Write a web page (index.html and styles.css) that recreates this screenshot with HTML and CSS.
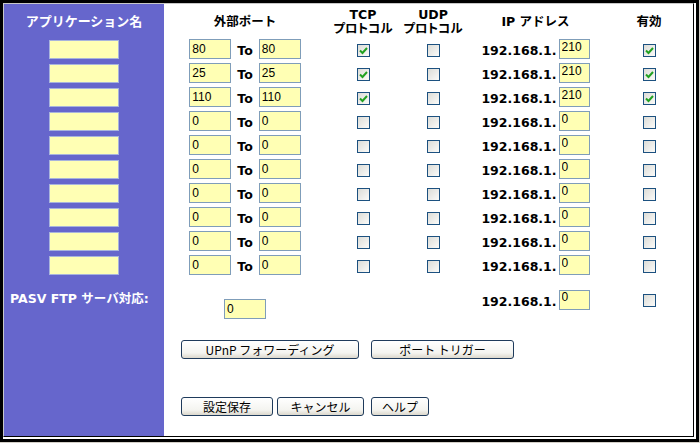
FILE: index.html
```html
<!DOCTYPE html>
<html lang="ja">
<head>
    <meta charset="UTF-8">
    <title>ポート フォワーディング</title>
    <link rel="stylesheet" href="styles.css">
</head>
<body>
    <div class="frame">
        <div class="panel">
            <table class="fwd">
                <colgroup>
                    <col class="c-app">
                    <col class="c-port">
                    <col class="c-tcp">
                    <col class="c-udp">
                    <col class="c-ip">
                    <col class="c-on">
                </colgroup>
                <thead>
                    <tr class="head">
                        <th class="side">アプリケーション名</th>
                        <th>外部ポート</th>
                        <th class="proto">TCP<br>プロトコル</th>
                        <th class="proto">UDP<br>プロトコル</th>
                        <th>IP アドレス</th>
                        <th>有効</th>
                    </tr>
                </thead>
                <tbody>
                    <tr class="rule">
                        <td class="side"><input class="field app" type="text"></td>
                        <td><div class="ports"><input class="field port" type="text" value="80"><b class="to">To</b><input class="field port" type="text" value="80"></div></td>
                        <td><span class="chk"><svg viewBox="0 0 11 11"><path d="M2 5.5 L4.5 8 L9 3"/></svg></span></td>
                        <td><span class="chk"></span></td>
                        <td><div class="ip"><b>192.168.1.</b><input class="field host" type="text" value="210"></div></td>
                        <td><span class="chk"><svg viewBox="0 0 11 11"><path d="M2 5.5 L4.5 8 L9 3"/></svg></span></td>
                    </tr>
                    <tr class="rule">
                        <td class="side"><input class="field app" type="text"></td>
                        <td><div class="ports"><input class="field port" type="text" value="25"><b class="to">To</b><input class="field port" type="text" value="25"></div></td>
                        <td><span class="chk"><svg viewBox="0 0 11 11"><path d="M2 5.5 L4.5 8 L9 3"/></svg></span></td>
                        <td><span class="chk"></span></td>
                        <td><div class="ip"><b>192.168.1.</b><input class="field host" type="text" value="210"></div></td>
                        <td><span class="chk"><svg viewBox="0 0 11 11"><path d="M2 5.5 L4.5 8 L9 3"/></svg></span></td>
                    </tr>
                    <tr class="rule">
                        <td class="side"><input class="field app" type="text"></td>
                        <td><div class="ports"><input class="field port" type="text" value="110"><b class="to">To</b><input class="field port" type="text" value="110"></div></td>
                        <td><span class="chk"><svg viewBox="0 0 11 11"><path d="M2 5.5 L4.5 8 L9 3"/></svg></span></td>
                        <td><span class="chk"></span></td>
                        <td><div class="ip"><b>192.168.1.</b><input class="field host" type="text" value="210"></div></td>
                        <td><span class="chk"><svg viewBox="0 0 11 11"><path d="M2 5.5 L4.5 8 L9 3"/></svg></span></td>
                    </tr>
                    <tr class="rule">
                        <td class="side"><input class="field app" type="text"></td>
                        <td><div class="ports"><input class="field port" type="text" value="0"><b class="to">To</b><input class="field port" type="text" value="0"></div></td>
                        <td><span class="chk"></span></td>
                        <td><span class="chk"></span></td>
                        <td><div class="ip"><b>192.168.1.</b><input class="field host" type="text" value="0"></div></td>
                        <td><span class="chk"></span></td>
                    </tr>
                    <tr class="rule">
                        <td class="side"><input class="field app" type="text"></td>
                        <td><div class="ports"><input class="field port" type="text" value="0"><b class="to">To</b><input class="field port" type="text" value="0"></div></td>
                        <td><span class="chk"></span></td>
                        <td><span class="chk"></span></td>
                        <td><div class="ip"><b>192.168.1.</b><input class="field host" type="text" value="0"></div></td>
                        <td><span class="chk"></span></td>
                    </tr>
                    <tr class="rule">
                        <td class="side"><input class="field app" type="text"></td>
                        <td><div class="ports"><input class="field port" type="text" value="0"><b class="to">To</b><input class="field port" type="text" value="0"></div></td>
                        <td><span class="chk"></span></td>
                        <td><span class="chk"></span></td>
                        <td><div class="ip"><b>192.168.1.</b><input class="field host" type="text" value="0"></div></td>
                        <td><span class="chk"></span></td>
                    </tr>
                    <tr class="rule">
                        <td class="side"><input class="field app" type="text"></td>
                        <td><div class="ports"><input class="field port" type="text" value="0"><b class="to">To</b><input class="field port" type="text" value="0"></div></td>
                        <td><span class="chk"></span></td>
                        <td><span class="chk"></span></td>
                        <td><div class="ip"><b>192.168.1.</b><input class="field host" type="text" value="0"></div></td>
                        <td><span class="chk"></span></td>
                    </tr>
                    <tr class="rule">
                        <td class="side"><input class="field app" type="text"></td>
                        <td><div class="ports"><input class="field port" type="text" value="0"><b class="to">To</b><input class="field port" type="text" value="0"></div></td>
                        <td><span class="chk"></span></td>
                        <td><span class="chk"></span></td>
                        <td><div class="ip"><b>192.168.1.</b><input class="field host" type="text" value="0"></div></td>
                        <td><span class="chk"></span></td>
                    </tr>
                    <tr class="rule">
                        <td class="side"><input class="field app" type="text"></td>
                        <td><div class="ports"><input class="field port" type="text" value="0"><b class="to">To</b><input class="field port" type="text" value="0"></div></td>
                        <td><span class="chk"></span></td>
                        <td><span class="chk"></span></td>
                        <td><div class="ip"><b>192.168.1.</b><input class="field host" type="text" value="0"></div></td>
                        <td><span class="chk"></span></td>
                    </tr>
                    <tr class="rule">
                        <td class="side"><input class="field app" type="text"></td>
                        <td><div class="ports"><input class="field port" type="text" value="0"><b class="to">To</b><input class="field port" type="text" value="0"></div></td>
                        <td><span class="chk"></span></td>
                        <td><span class="chk"></span></td>
                        <td><div class="ip"><b>192.168.1.</b><input class="field host" type="text" value="0"></div></td>
                        <td><span class="chk"></span></td>
                    </tr>

                    <!-- passive FTP helper -->
                    <tr class="pasv">
                        <td class="side label">PASV FTP サーバ対応:</td>
                        <td><input class="field port pasv-port" type="text" value="0"></td>
                        <td></td>
                        <td></td>
                        <td><div class="ip"><b>192.168.1.</b><input class="field host" type="text" value="0"></div></td>
                        <td><span class="chk"></span></td>
                    </tr>

                    <tr class="actions">
                        <td class="side"></td>
                        <td colspan="5">
                            <div class="btn-row">
                                <button class="btn btn-upnp">UPnP フォワーディング</button>
                                <button class="btn btn-trigger">ポート トリガー</button>
                            </div>
                            <div class="btn-row bottom">
                                <button class="btn btn-save">設定保存</button>
                                <button class="btn btn-cancel">キャンセル</button>
                                <button class="btn btn-help">ヘルプ</button>
                            </div>
                        </td>
                    </tr>
                </tbody>
            </table>
        </div>
    </div>
</body>
</html>
```

FILE: styles.css
```css
* {
    box-sizing: border-box;
}

body {
    margin: 0;
    background: #d4d0c8;
    font-family: "DejaVu Sans", "Noto Sans CJK JP", sans-serif;
    color: #000;
}

/* double black frame round the whole panel */
.frame {
    width: 699px;
    height: 442px;
    border: 3px solid #000;
    padding: 0 2px 2px 0;
    background: #fff;
}

.panel {
    height: 100%;
    border: 1px solid;
    border-color: #c8c8c8 #000 #000 #c8c8c8;
    background: #fff;
}

.fwd {
    width: 100%;
    border-collapse: collapse;
    table-layout: fixed;
}

.c-app  { width: 160px; }
.c-port { width: 162px; }
.c-tcp  { width: 74px; }
.c-udp  { width: 66px; }
.c-ip   { width: 139px; }

.fwd th,
.fwd td {
    padding: 0;
    text-align: center;
    vertical-align: middle;
}

.fwd th {
    font-size: 12.5px;
    font-weight: bold;
}

.fwd .side {
    background: #6666cc;
    color: #fff;
}

th.side {
    font-size: 13px;
}

.proto {
    line-height: 14px;
    padding-top: 2px !important;
    font-feature-settings: "palt";
}

.head { height: 33px; }
.rule { height: 24px; }
.pasv { height: 45px; }
.actions { height: 114px; }

/* text boxes */
.field {
    margin: 0;
    height: 20px;
    padding: 0 2px;
    border: 1px solid #7f9db9;
    background: #ffffb4;
    font: 12px "Liberation Sans", sans-serif;
    color: #000;
    vertical-align: middle;
}

.app {
    width: 70px;
    height: 19px;
    display: block;
    margin: 0 auto;
    border-color: #a8b4dc;
}

.port {
    width: 42px;
}

.host {
    width: 31px;
    padding: 0 0 5px 2px;
}

.pasv-port {
    margin-top: 18px;
}

.ports {
    display: flex;
    align-items: center;
    justify-content: center;
    gap: 6px;
}

.to,
.ip b {
    font-size: 12.5px;
    font-weight: bold;
}

.to {
    margin-top: 3px;
}

.ip {
    display: flex;
    align-items: center;
    justify-content: center;
    gap: 2px;
}

.ip b {
    margin-top: 3px;
}

/* xp style check boxes */
.chk {
    display: inline-block;
    width: 13px;
    height: 13px;
    border: 1px solid #1c5180;
    background: linear-gradient(135deg, #dcdcd7 0%, #fbfbf9 100%);
    vertical-align: middle;
}

.chk svg {
    display: block;
    width: 11px;
    height: 11px;
}

.chk path {
    fill: none;
    stroke: #21a121;
    stroke-width: 2;
}

.label {
    text-align: left !important;
    padding-left: 6px !important;
    padding-bottom: 4px !important;
    font-size: 12.5px;
    font-weight: bold;
}

/* buttons */
.fwd .actions td {
    vertical-align: top;
}

.btn-row {
    display: flex;
    padding-left: 17px;
    margin-top: 18px;
}

.btn-row.bottom {
    margin-top: 38px;
}

.btn {
    height: 19px;
    padding: 0;
    border: 1px solid #1f3b5c;
    border-radius: 3px;
    background: linear-gradient(#ffffff 0%, #f4f4f0 70%, #dcd8cc 100%);
    font: 12px "Noto Sans CJK JP", sans-serif;
    color: #000;
    line-height: 16px;
}

.btn-upnp    { width: 178px; }
.btn-trigger { width: 143px; margin-left: 12px; }
.btn-save    { width: 92px; }
.btn-cancel  { width: 87px; margin-left: 4px; }
.btn-help    { width: 58px; margin-left: 7px; }
```
